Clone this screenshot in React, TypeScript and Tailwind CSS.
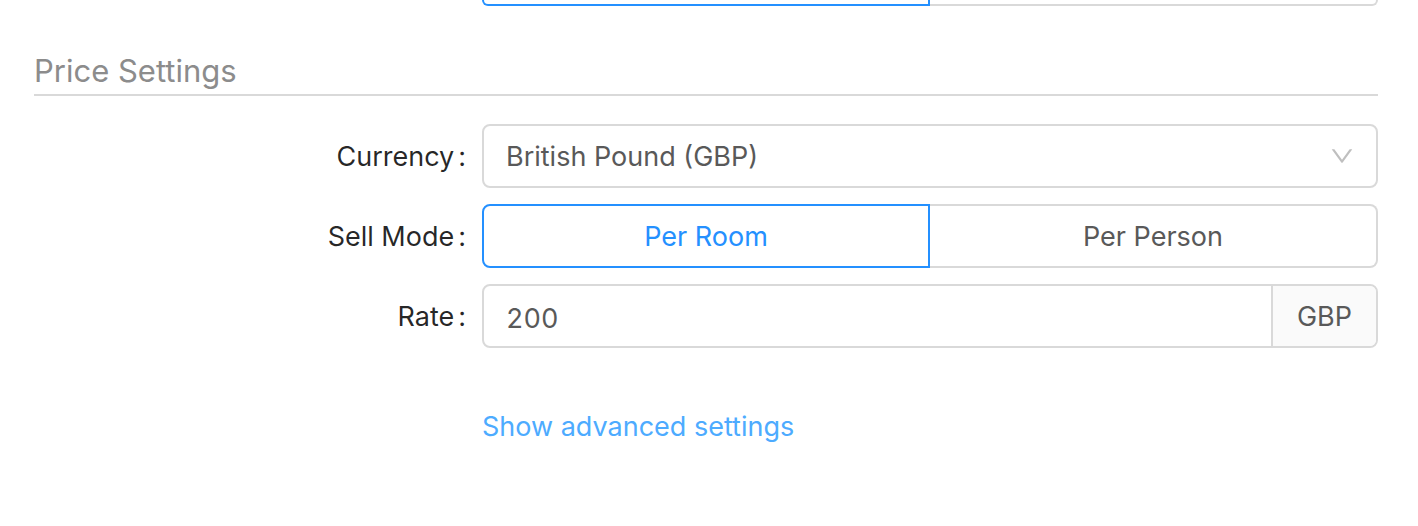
import { useState, type ReactNode } from 'react';

function Row({ label, htmlFor, id, children }: { label: string; htmlFor?: string; id?: string; children: ReactNode }) {
  return (
    <div className="grid grid-cols-3">
      <div className="flex h-16 items-center justify-end pt-0.5 pr-4 text-black/85">
        {htmlFor ? <label htmlFor={htmlFor}>{label}<span className="ml-1">:</span></label> : <span id={id}>{label}<span className="ml-1">:</span></span>}
      </div>
      <div className="col-span-2">{children}</div>
    </div>
  );
}

export default function App() {
  const [mode, setMode] = useState('Per Room');
  const [rate, setRate] = useState('200');
  return (
    <main className="bg-white pr-10 pb-20 pl-[34px] font-['Inter',sans-serif] text-[27px] leading-10 text-[#595959]">
      <div className="grid grid-cols-3">
        <div className="col-span-2 col-start-2 grid h-1.5 grid-cols-2">
          <div className="rounded-bl-lg border-2 border-t-0 border-[#2490ff]" />
          <div className="rounded-br-lg border-2 border-t-0 border-l-0 border-[#d9d9d9]" />
        </div>
      </div>
      <h2 className="mt-11 mb-7 border-b-2 border-[#d9d9d9] pb-0.5 text-[31px] leading-[42px] text-[#8c8c8c]">Price Settings</h2>
      <form className="flex flex-col gap-4" onSubmit={(e) => e.preventDefault()}>
        <Row label="Currency" htmlFor="currency">
          <div className="relative">
            <select id="currency" className="h-16 w-full appearance-none rounded-lg border-2 border-[#d9d9d9] bg-white px-[22px] pt-0.5">
              <option>British Pound (GBP)</option>
            </select>
            <svg className="pointer-events-none absolute top-5 right-6 size-6" viewBox="64 64 896 896" fill="#bfbfbf" aria-hidden="true">
              <path d="M884 256h-75c-5.1 0-9.9 2.5-12.9 6.6L512 654.2 227.9 262.6c-3-4.1-7.8-6.6-12.9-6.6h-75c-6.5 0-10.3 7.4-6.5 12.7l352.6 486.1c12.8 17.6 39 17.6 51.7 0l352.6-486.1c3.9-5.3.1-12.7-6.4-12.7z" />
            </svg>
          </div>
        </Row>
        <Row label="Sell Mode" id="sell-mode">
          <div role="group" aria-labelledby="sell-mode" className="grid h-16 grid-cols-2">
            {['Per Room', 'Per Person'].map((name, i) => (
              <button
                key={name}
                type="button"
                aria-pressed={mode === name}
                onClick={() => setMode(name)}
                className={`border-2 pt-0.5 ${i === 0 ? 'rounded-l-lg' : 'rounded-r-lg'} ${mode === name ? 'border-[#2490ff] text-[#2490ff]' : i === 0 ? 'border-r-0 border-[#d9d9d9]' : 'border-l-0 border-[#d9d9d9]'}`}
              >
                {name}
              </button>
            ))}
          </div>
        </Row>
        <Row label="Rate" htmlFor="rate">
          <div className="flex h-16 rounded-lg border-2 border-[#d9d9d9]">
            <input id="rate" value={rate} onChange={(e) => setRate(e.target.value)} className="min-w-0 flex-1 rounded-l-md px-[22px] pt-1.5 tabular-nums" />
            <span className="flex items-center rounded-r-md border-l-2 border-[#d9d9d9] bg-[#fafafa] px-6 pt-0.5">GBP</span>
          </div>
        </Row>
      </form>
      <div className="mt-[59px] grid grid-cols-3">
        <a href="#advanced" className="col-start-2 justify-self-start whitespace-nowrap text-[#4dabff]">Show advanced settings</a>
      </div>
    </main>
  );
}
